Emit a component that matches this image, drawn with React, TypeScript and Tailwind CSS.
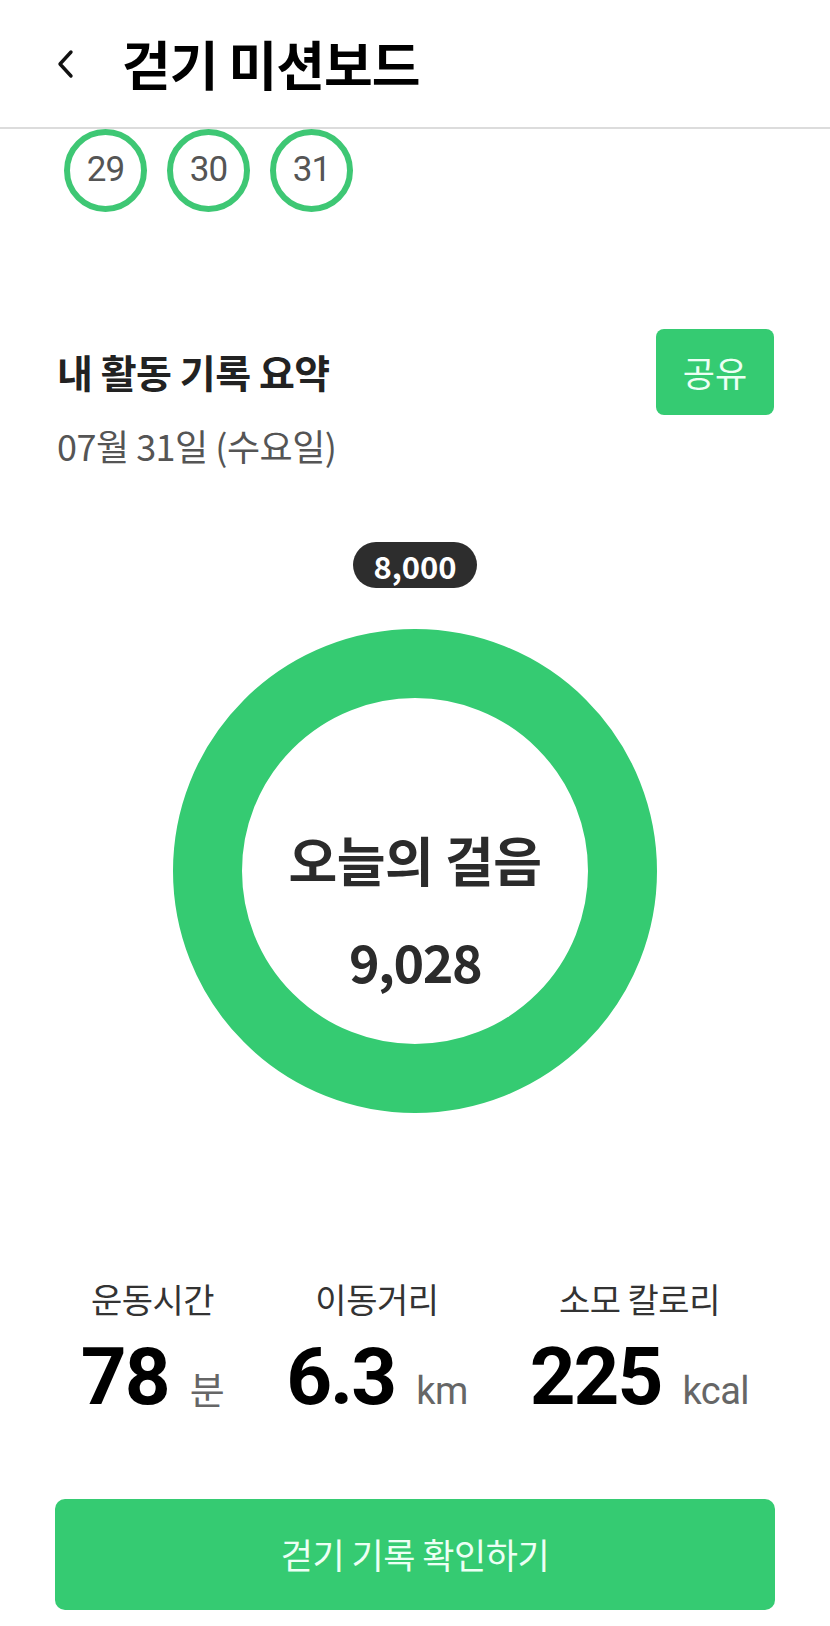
import React from "react";

const KR = "font-['Noto_Sans_CJK_KR','Noto_Sans',sans-serif]";

function Stat({ label, value, unit }: { label: string; value: string; unit: string }) {
  return (
    <div className="flex flex-col items-center">
      <div className={`${KR} text-[34px] leading-[40px] text-[#333] tracking-[-0.5px]`}>{label}</div>
      <div className="mt-[17px] flex items-baseline">
        <span className="font-['Roboto','Liberation_Sans',sans-serif] text-[80px] font-bold leading-[82px] text-black tracking-[-2px]">
          {value}
        </span>
        <span className={`ml-[21px] font-['Roboto','Noto_Sans_CJK_KR',sans-serif] text-[38px] leading-[40px] text-[#666] tracking-[-0.5px]`}>
          {unit}
        </span>
      </div>
    </div>
  );
}

export default function App() {
  return (
    <div className={`w-[830px] min-h-[1626px] bg-white ${KR} overflow-hidden`}>
      <header className="flex h-[129px] items-center border-b-2 border-[#dcdcdc] bg-white">
        <div className="ml-[56px] flex w-[20px] items-center">
          <svg width="20" height="32" viewBox="0 0 20 32" fill="none">
            <path d="M15 4 L4 16 L15 28" stroke="#111" strokeWidth="3.4" strokeLinecap="round" strokeLinejoin="round" />
          </svg>
        </div>
        <h1 className={`${KR} ml-[46px] text-[53px] font-bold leading-none text-black tracking-[-1px]`}>걷기 미션보드</h1>
      </header>

      <div className="flex h-[83px] gap-[20px] pl-[64px]">
        {["29", "30", "31"].map((d) => (
          <div
            key={d}
            className="flex h-[83px] w-[83px] items-center justify-center rounded-full border-[6px] border-[#3ec774]"
          >
            <span className="font-['Roboto',sans-serif] text-[35px] text-[#555] tracking-[-1px]">{d}</span>
          </div>
        ))}
      </div>

      <section className="mt-[117px] flex justify-between pl-[57px] pr-[56px]">
        <div className="pt-[20px]">
          <div className={`${KR} text-[39px] font-bold leading-[44px] text-[#222] tracking-[-0.5px]`}>내 활동 기록 요약</div>
          <div className={`${KR} mt-[32px] text-[36px] leading-[40px] text-[#555] tracking-[-0.5px]`}>07월 31일 (수요일)</div>
        </div>
        <button className="flex h-[86px] w-[118px] items-center justify-center rounded-[8px] bg-[#35cb72]">
          <span className={`${KR} text-[35px] text-[#ecfff4]`}>공유</span>
        </button>
      </section>

      <div className="mt-[77px] flex justify-center">
        <div className="flex h-[46px] w-[124px] items-center justify-center rounded-full bg-[#2d2d2d]">
          <span className={`${KR} text-[31px] font-bold leading-none text-white`}>8,000</span>
        </div>
      </div>

      <div className="mt-[41px] flex justify-center">
        <div className="flex h-[484px] w-[484px] flex-col items-center rounded-full border-[69px] border-[#35cb72] pt-[131px]">
          <div className={`${KR} text-[53px] font-bold leading-[60px] text-[#2b2b2b] tracking-[-0.5px]`}>오늘의 걸음</div>
          <div className={`${KR} mt-[42px] text-[52px] font-bold leading-[60px] text-[#2b2b2b] tracking-[-1.5px]`}>9,028</div>
        </div>
      </div>

      <div className="mt-[166px] flex justify-center gap-[62px]">
        <Stat label="운동시간" value="78" unit="분" />
        <Stat label="이동거리" value="6.3" unit="km" />
        <Stat label="소모 칼로리" value="225" unit="kcal" />
      </div>

      <div className="mt-[81px] px-[55px]">
        <button className="flex h-[111px] w-full items-center justify-center rounded-[10px] bg-[#35cb72]">
          <span className={`${KR} text-[35px] text-[#ecfff4] tracking-[-0.5px]`}>걷기 기록 확인하기</span>
        </button>
      </div>
    </div>
  );
}
